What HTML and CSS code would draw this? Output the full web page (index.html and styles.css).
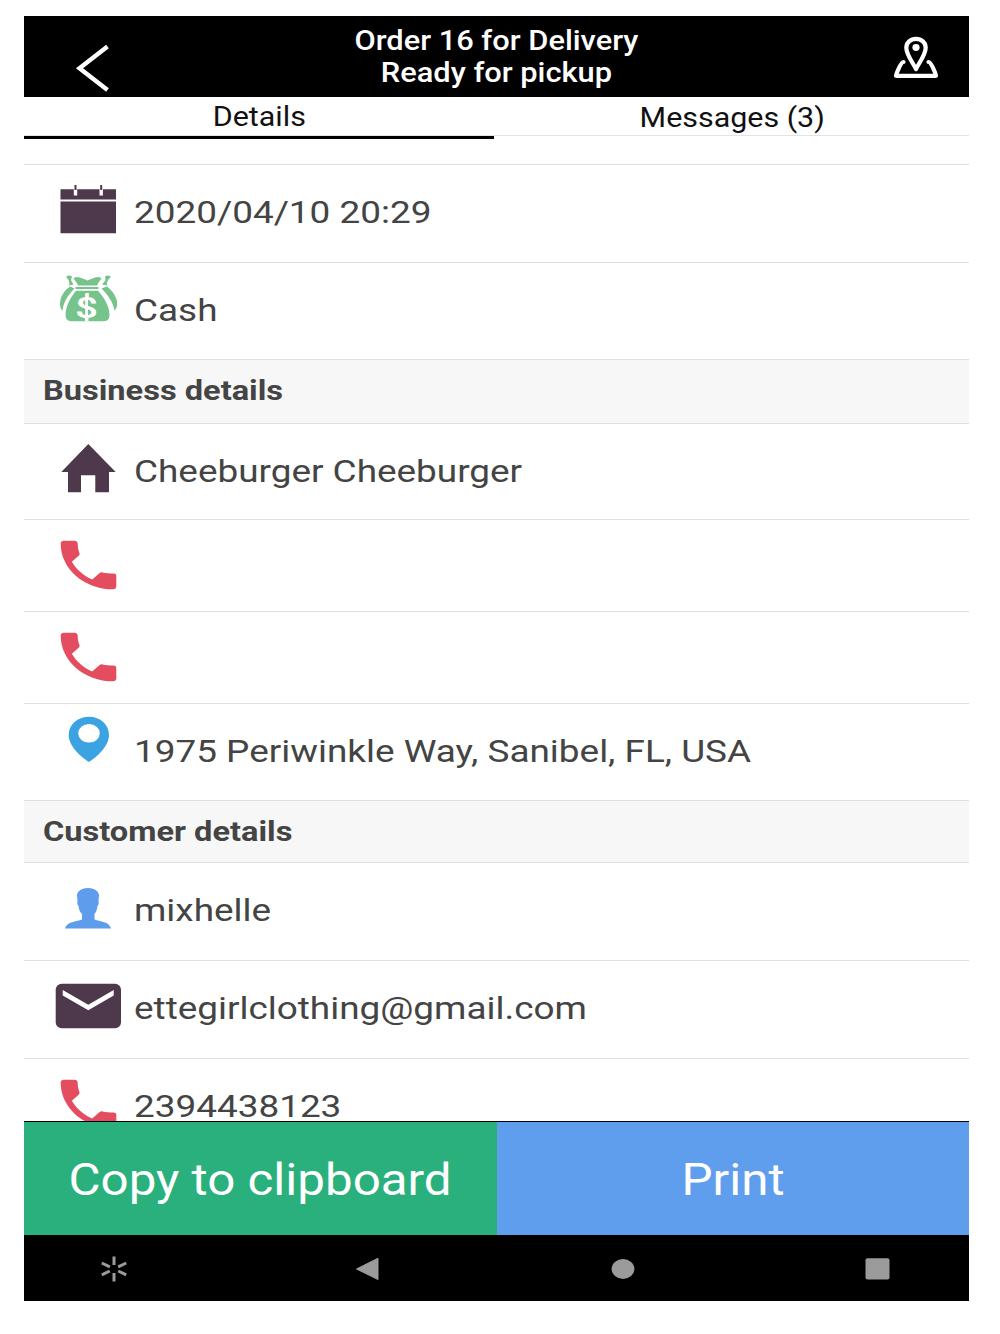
FILE: index.html
```html
<!DOCTYPE html>
<html lang="en">

<head>
    <meta charset="UTF-8">
    <meta name="viewport" content="width=device-width, initial-scale=1.0">
    <title>Order 16</title>
    <link rel="stylesheet" href="styles.css">
</head>

<body>
    <svg class="defs" width="0" height="0">
        <symbol id="phone" viewBox="0 0 68 72">
            <path transform="translate(-3.6 12.6) scale(3.09 2.7)" fill="#e44d60" d="M6.62 10.79c1.44 2.83 3.76 5.14 6.59 6.59l2.4-2.4c.27-.27.5-.26.9-.24 1.12.27 2.33.37 3.69.37.55 0 .8.35.8.9V20c0 .55-.45 1-1 1-9.39 0-17-7.61-17-17 0-.55.45-1 1-1h3.5c.55 0 1 .45 1 1 0 1.25.2 2.45.57 3.57.11.35.03.74-.25 1.02l-2.2 2.2z"/>
        </symbol>
    </svg>

    <div class="app">
        <header class="header">
            <svg width="100" height="81" viewBox="-30 0 100 81">
                <path d="M53.5 30.5L25.5 52.3L53.5 74" fill="none" stroke="#fff" stroke-width="4.4"/>
            </svg>
            <h1 class="title">
                <span class="wide">Order 16 for Delivery</span>
                <span class="wide">Ready for pickup</span>
            </h1>
            <svg width="100" height="81" viewBox="-30 0 100 81">
                <g fill="none" stroke="#fff" stroke-width="4.2" stroke-linejoin="round" stroke-linecap="round">
                    <path d="M17 53C14 47 7.3 38.5 7.3 31.7C7.3 26.5 11.5 22.9 17 22.9S26.7 26.5 26.7 31.7C26.7 38.5 20 47 17 53Z"/>
                    <path d="M4.5 46C2 46-2.5 57-3 59.8H37C36.5 57 32 46 29.5 46"/>
                </g>
                <ellipse cx="17" cy="31.5" rx="3.6" ry="3.4" fill="#fff"/>
            </svg>
        </header>

        <nav class="tabs">
            <div class="tab active"><span class="wide">Details</span></div>
            <div class="tab"><span class="wide">Messages (3)</span></div>
        </nav>

        <main class="content">
            <div class="row spacer"></div>
            <div class="row">
                <svg class="icon" viewBox="0 0 68 72">
                    <path fill="#4e384c" d="M5.5 24.3H61V34.5H5.5ZM5.5 36.5H61V68.3H5.5Z"/>
                    <path fill="#fff" d="M18.8 24H22.2V30.5H18.8ZM44.5 24H47.9V30.5H44.5Z"/>
                    <path fill="#4e384c" d="M19.5 20H21.5V25H19.5ZM45.2 20H47.2V25H45.2Z"/>
                </svg>
                <span class="wide">2020/04/10 20:29</span>
            </div>
            <div class="row cash">
                <svg class="icon" viewBox="0 0 68 72">
                    <g fill="#76c38b">
                        <path d="M18.5 15.5Q20 13 25 14.5Q29 16 32.5 17.5Q36 16 40 14.5Q45 13 46.5 15.5Q43.5 19 42 22.5H23Q21.5 19 18.5 15.5Z"/>
                        <path d="M20.5 24H43.5V26H20.5Z"/>
                        <path d="M21 27.8H43C48 33 54.5 43 54.5 52Q54.5 58.3 48 58.3H17Q10.5 58.3 10.5 52C10.5 43 16.5 33 21 27.8Z"/>
                        <path d="M15 23.5L19.5 25.5C13 32 8.5 39 7.5 47.5C4.5 45 4.5 40 6 35Q8.5 28 15 23.5Z"/>
                        <path d="M52 23.5L46.5 25.5C53 32 58 39 59.5 47.5C62.5 45 63 40 61 35Q58 28 52 23.5Z"/>
                        <path d="M11 14Q14 11.5 17 13.5L16 17Q17 19.5 18.5 21.5L14 22.5Q15.5 18 11 14Z"/>
                        <path d="M56 14Q53 11.5 50 13.5L50.5 17Q49 19.5 47 21.5L52 22.5Q51 18 56 14Z"/>
                    </g>
                    <path fill="#fff" d="M30.2 30.5H33V58.3H30.2Z"/>
                    <text class="dollar" transform="translate(31.5 55) scale(1.35 1)">$</text>
                </svg>
                <span class="wide">Cash</span>
            </div>
            <h2 class="section"><span class="wide">Business details</span></h2>
            <div class="row name">
                <svg class="icon" viewBox="0 0 68 72">
                    <path fill="#4e384c" d="M33.3 20L60.7 48H54V68.3H40.3V51.3H26V68.3H13V48H6.3Z"/>
                </svg>
                <span class="wide">Cheeburger Cheeburger</span>
            </div>
            <div class="row empty">
                <svg class="icon"><use href="#phone"/></svg>
            </div>
            <div class="row empty">
                <svg class="icon"><use href="#phone"/></svg>
            </div>
            <div class="row address">
                <svg class="icon" viewBox="0 0 68 72">
                    <path fill="#3ba3e2" fill-rule="evenodd" d="M34 58C26 53 13.7 42 13.7 31C13.7 20.5 22.5 12.7 34 12.7S54 20.5 54 31C54 42 42 53 34 58ZM34 20A10.8 9.3 0 1 0 34 38.6A10.8 9.3 0 1 0 34 20Z"/>
                </svg>
                <span class="wide">1975 Periwinkle Way, Sanibel, FL, USA</span>
            </div>
            <h2 class="section customer"><span class="wide">Customer details</span></h2>
            <div class="row">
                <svg class="icon" viewBox="0 0 68 72">
                    <path fill="#5e9cec" d="M33 25C39 25 44 28 44 32.5L43.5 38Q44.5 41 42.5 43C42 47 41 49 39.5 51V56.5C45 58.500 54.500 58.500 56 65.500H10C11.500 58.500 22 58.500 27 56.500V51C25 49 24 47 23.5 43Q21.5 41 22.5 38L22 32.5C22 28 27 25 33 25Z"/>
                </svg>
                <span class="wide">mixhelle</span>
            </div>
            <div class="row">
                <svg class="icon" viewBox="0 0 68 72">
                    <rect x=".7" y="22.7" width="65.3" height="44.6" rx="6" fill="#4e384c"/>
                    <path fill="#fff" d="M7.7 29L33.3 43.7L58.7 29V34.6L33.3 49.3L7.7 34.6Z"/>
                </svg>
                <span class="wide">ettegirlclothing@gmail.com</span>
            </div>
            <div class="row">
                <svg class="icon"><use href="#phone"/></svg>
                <span class="wide">2394438123</span>
            </div>
        </main>

        <footer class="actions">
            <button class="action copy"><span class="wide">Copy to clipboard</span></button>
            <button class="action print"><span class="wide">Print</span></button>
        </footer>

        <div class="navbar">
            <svg width="28" height="26" viewBox="0 0 28 26">
                <path stroke="#9b9b9b" stroke-width="3" d="M14 .5V9M14 17V25.5M1.8 7L9.8 10.8M18.2 15L26.2 18.8M1.8 18.8L9.8 15M18.2 10.8L26.2 7"/>
            </svg>
            <svg width="28" height="26" viewBox="0 0 28 26">
                <path fill="#9b9b9b" stroke="#9b9b9b" stroke-linejoin="round" d="M2.5 13L24 2.2V23.6Z"/>
            </svg>
            <svg width="28" height="26" viewBox="0 0 28 26">
                <ellipse cx="14" cy="13" rx="11.4" ry="10" fill="#9b9b9b"/>
            </svg>
            <svg width="28" height="26" viewBox="0 0 28 26">
                <rect x="2.5" y="2.3" width="24" height="21.2" rx="2" fill="#9b9b9b"/>
            </svg>
        </div>
    </div>
</body>

</html>
```
FILE: styles.css
```css
*, *::before, *::after {
    box-sizing: border-box;
}

body {
    margin: 0;
    padding: 16px 31px 0 24px;
    background-color: #fff;
    font-family: Roboto, "Liberation Sans", sans-serif;
    color: #444;
}

h1,
h2 {
    margin: 0;
}

.defs {
    display: block;
}

.app {
    display: flex;
    flex-direction: column;
    width: 945px;
    height: 1285px;
}

/* extended letter shapes */
.wide {
    display: block;
    white-space: nowrap;
    transform: scaleX(1.153);
}

.header {
    display: flex;
    justify-content: space-between;
    height: 81px;
    background-color: #000;
}

.title {
    padding-top: 9px;
    font-size: 27px;
    font-weight: 500;
    line-height: 32px;
    text-align: center;
    color: #fff;
}

.title .wide {
    transform: scaleX(1.141);
}

.tabs {
    display: flex;
    height: 39px;
    border-bottom: 1px solid #e3e3e3;
}

.tab {
    position: relative;
    flex: 1;
    display: flex;
    justify-content: center;
    padding: 5px 0 0 2px;
    font-size: 27px;
    line-height: 32px;
    color: #111;
}

.tab .wide {
    transform: scaleX(1.127);
}

.tab.active {
    flex: 0 0 470px;
    padding: 4px 0 0;
}

.tab.active::after {
    content: "";
    position: absolute;
    left: 0;
    right: 0;
    bottom: -4px;
    height: 3px;
    background-color: #000;
}

.content {
    flex: 1;
    overflow: hidden;
}

.row {
    display: flex;
    align-items: flex-start;
    height: 98px;
    padding-left: 31px;
    border-bottom: 1px solid #dfdfdf;
    font-size: 32px;
    line-height: 30px;
}

.row .wide {
    margin: 32px 0 0 11px;
    transform-origin: left;
}

.row.spacer {
    height: 29px;
}

.row.cash,
.row.address {
    height: 97px;
}

.row.name {
    height: 96px;
}

.row.empty {
    height: 92px;
}

.icon {
    flex: none;
    width: 68px;
    height: 72px;
}

.dollar {
    font-size: 30px;
    font-weight: 500;
    text-anchor: middle;
    fill: #fff;
}

.section {
    height: 64px;
    padding: 14px 0 0 19px;
    border-bottom: 1px solid #dfdfdf;
    background-color: #f7f7f7;
    font-size: 28px;
    font-weight: 700;
    line-height: 34px;
}

.section.customer {
    height: 62px;
}

.section .wide {
    transform: scaleX(1.163);
    transform-origin: left;
}

.actions {
    display: flex;
    height: 114px;
    border-top: 1px solid #000;
}

.action {
    flex: 1;
    display: flex;
    align-items: center;
    justify-content: center;
    padding: 3px 0 0;
    border: 0;
    font-family: inherit;
    font-size: 44px;
    color: #fff;
}

.action .wide {
    transform: scaleX(1.12);
}

.copy {
    background-color: #2ab07c;
}

.print {
    background-color: #5f9ded;
}

.navbar {
    display: flex;
    justify-content: space-between;
    align-items: center;
    height: 66px;
    padding: 2px 78px 0 76px;
    background-color: #000;
}
```
